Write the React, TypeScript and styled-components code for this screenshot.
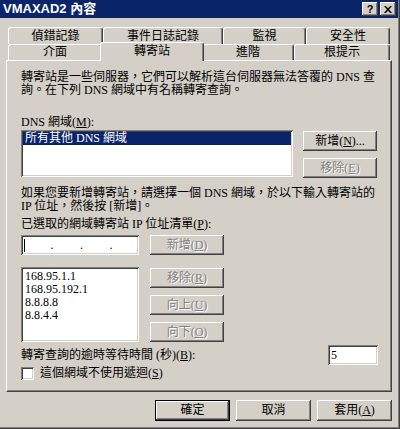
import React from 'react'
import styled, { createGlobalStyle } from 'styled-components'

const GlobalStyle = createGlobalStyle`
    html, body {
        margin: 0;
        padding: 0;
        background: #d4d0c8;
    }
    body {
        font-family: "Liberation Serif", "Noto Sans CJK TC", serif;
        font-size: 12px;
        color: #000;
    }
`

const raised = `
    background: #d4d0c8;
    box-shadow: inset -1px -1px #404040, inset 1px 1px #ffffff, inset -2px -2px #808080, inset 2px 2px #d4d0c8;
`

const sunken = `
    background: #ffffff;
    box-shadow: inset 1px 1px #808080, inset -1px -1px #ffffff, inset 2px 2px #404040, inset -2px -2px #d4d0c8;
`

const backTabs = [
    { label: '偵錯記錄', w: 95 },
    { label: '事件日誌記錄', w: 120 },
    { label: '監視', w: 83 },
    { label: '安全性', w: 84 },
]

const frontTabs = [
    { label: '介面', w: 94 },
    { label: '轉寄站', w: 104, active: true },
    { label: '進階', w: 92 },
    { label: '根提示', w: 96 },
]

const servers = ['168.95.1.1', '168.95.192.1', '8.8.8.8', '8.8.4.4']

const Key = ({ children }: { children: string }) => <u>{children}</u>

export default function App() {
    return (
        <>
            <GlobalStyle />
            <Window>
                <TitleBar>
                    <Title>VMAXAD2 內容</Title>
                    <TitleButtons>
                        <TitleButton>?</TitleButton>
                        <TitleButton>
                            <svg width="8" height="7" viewBox="0 0 8 7">
                                <path d="M0 0h2l2 2.5L6 0h2L5 3.5 8 7H6L4 4.5 2 7H0l3-3.5z" fill="#000" />
                            </svg>
                        </TitleButton>
                    </TitleButtons>
                </TitleBar>
                <Body>
                    <TabStrip>
                        <TabRow $h={17}>
                            {backTabs.map(t => (
                                <Tab key={t.label} $w={t.w}>{t.label}</Tab>
                            ))}
                        </TabRow>
                        <TabRow $h={16}>
                            {frontTabs.map(t => (
                                <Tab key={t.label} $w={t.w} $active={t.active}>{t.label}</Tab>
                            ))}
                        </TabRow>
                    </TabStrip>
                    <Panel>
                        <Para>
                            轉寄站是一些伺服器，它們可以解析這台伺服器無法答覆的 DNS 查
                            <br />
                            詢。在下列 DNS 網域中有名稱轉寄查詢。
                        </Para>
                        <FieldLabel $mt={19}>DNS 網域(<Key>M</Key>):</FieldLabel>
                        <ListRow $mt={1} $gap={10}>
                            <ListBox $w={272} $h={47}>
                                <ListItem $selected>所有其他 DNS 網域</ListItem>
                            </ListBox>
                            <ButtonColumn>
                                <Button>新增(<Key>N</Key>)...</Button>
                                <Button disabled>移除(<Key>E</Key>)</Button>
                            </ButtonColumn>
                        </ListRow>
                        <Para $mt={9}>
                            如果您要新增轉寄站，請選擇一個 DNS 網域，於以下輸入轉寄站的
                            <br />
                            IP 位址，然後按 [新增]。
                        </Para>
                        <FieldLabel $mt={5}>已選取的網域轉寄站 IP 位址清單(<Key>P</Key>):</FieldLabel>
                        <ListRow $mt={4} $gap={11}>
                            <IpField>
                                <IpSegment><Caret /></IpSegment>
                                <IpDot>.</IpDot>
                                <IpSegment />
                                <IpDot>.</IpDot>
                                <IpSegment />
                                <IpDot>.</IpDot>
                                <IpSegment />
                            </IpField>
                            <Button disabled>新增(<Key>D</Key>)</Button>
                        </ListRow>
                        <ListRow $mt={12} $gap={11}>
                            <ListBox $w={118} $h={75} $pt={1}>
                                {servers.map(s => (
                                    <ListItem key={s}>{s}</ListItem>
                                ))}
                            </ListBox>
                            <ButtonColumn>
                                <Button disabled>移除(<Key>R</Key>)</Button>
                                <Button disabled>向上(<Key>U</Key>)</Button>
                                <Button disabled>向下(<Key>O</Key>)</Button>
                            </ButtonColumn>
                        </ListRow>
                        <TimeoutRow>
                            <span>轉寄查詢的逾時等待時間 (秒)(<Key>B</Key>):</span>
                            <NumberField>5</NumberField>
                        </TimeoutRow>
                        <CheckRow>
                            <CheckBox />
                            <span>這個網域不使用遞迴(<Key>S</Key>)</span>
                        </CheckRow>
                    </Panel>
                    <ButtonBar>
                        <DialogButton $default>確定</DialogButton>
                        <DialogButton>取消</DialogButton>
                        <DialogButton>套用(<Key>A</Key>)</DialogButton>
                    </ButtonBar>
                </Body>
            </Window>
        </>
    )
}

const Window = styled.div`
    width: 400px;
    height: 429px;
    box-sizing: border-box;
    padding: 0 2px 2px 0;
    background: #d4d0c8;
    box-shadow: inset -1px -1px #404040, inset -2px -2px #808080;
    display: flex;
    flex-direction: column;
    overflow: hidden;
`

const TitleBar = styled.div`
    height: 18px;
    background: #0a246a;
    display: flex;
    align-items: center;
    justify-content: space-between;
    padding: 0 2px 0 3px;
`

const Title = styled.div`
    font-family: "Liberation Sans", "Noto Sans CJK TC", sans-serif;
    font-weight: 700;
    font-size: 13px;
    line-height: 16px;
    color: #ffffff;
    white-space: nowrap;
`

const TitleButtons = styled.div`
    display: flex;
    gap: 2px;
`

const TitleButton = styled.div`
    ${raised}
    width: 16px;
    height: 14px;
    display: flex;
    align-items: center;
    justify-content: center;
    font-family: "Liberation Sans", sans-serif;
    font-weight: 700;
    font-size: 11px;
    line-height: 14px;
`

const Body = styled.div`
    flex: 1;
    display: flex;
    flex-direction: column;
    padding: 9px 6px 0 6px;
`

const TabStrip = styled.div`
    display: flex;
    flex-direction: column;
    padding-left: 2px;
`

const TabRow = styled.div<{ $h: number }>`
    display: flex;
    height: ${p => p.$h}px;
`

const Tab = styled.div<{ $w: number; $active?: boolean }>`
    box-sizing: border-box;
    width: ${p => p.$w}px;
    height: ${p => (p.$active ? 'calc(100% + 3px)' : '100%')};
    margin: ${p => (p.$active ? '-2px -2px -1px' : '0')};
    padding-bottom: ${p => (p.$active ? '2px' : '0')};
    position: ${p => (p.$active ? 'relative' : 'static')};
    z-index: ${p => (p.$active ? 1 : 0)};
    background: #d4d0c8;
    border-top: 1px solid #ffffff;
    border-left: 1px solid #ffffff;
    border-right: 1px solid #404040;
    border-radius: 3px 3px 0 0;
    box-shadow: inset -1px 0 #808080;
    display: flex;
    align-items: center;
    justify-content: center;
    line-height: 13px;
    white-space: nowrap;
`

const Panel = styled.div`
    box-sizing: border-box;
    height: 332px;
    border-top: 1px solid #ffffff;
    border-left: 1px solid #ffffff;
    border-right: 1px solid #404040;
    border-bottom: 1px solid #404040;
    box-shadow: inset -1px -1px #808080;
    padding: 10px 13px 0 14px;
    display: flex;
    flex-direction: column;
`

const Para = styled.p<{ $mt?: number }>`
    margin: ${p => p.$mt ?? 0}px 0 0;
    line-height: 13px;
    white-space: nowrap;
`

const FieldLabel = styled.div<{ $mt: number }>`
    margin-top: ${p => p.$mt}px;
    line-height: 13px;
    white-space: nowrap;
`

const ListRow = styled.div<{ $mt: number; $gap: number }>`
    display: flex;
    align-items: flex-start;
    gap: ${p => p.$gap}px;
    margin-top: ${p => p.$mt}px;
`

const ListBox = styled.div<{ $w: number; $h: number; $pt?: number }>`
    ${sunken}
    box-sizing: border-box;
    width: ${p => p.$w}px;
    height: ${p => p.$h}px;
    padding: ${p => 2 + (p.$pt ?? 0)}px 2px 2px;
    overflow: hidden;
`

const ListItem = styled.div<{ $selected?: boolean }>`
    line-height: 13px;
    height: 13px;
    padding-left: 2px;
    white-space: nowrap;
    background: ${p => (p.$selected ? '#0a246a' : 'transparent')};
    color: ${p => (p.$selected ? '#ffffff' : '#000000')};
`

const ButtonColumn = styled.div`
    display: flex;
    flex-direction: column;
    gap: 7px;
    padding-top: 1px;
`

const Button = styled.div<{ disabled?: boolean }>`
    ${raised}
    box-sizing: border-box;
    width: 74px;
    height: 20px;
    display: flex;
    align-items: center;
    justify-content: center;
    line-height: 13px;
    white-space: nowrap;
    color: ${p => (p.disabled ? '#808080' : '#000000')};
    text-shadow: ${p => (p.disabled ? '1px 1px #ffffff' : 'none')};
`

const IpField = styled.div`
    ${sunken}
    box-sizing: border-box;
    width: 118px;
    height: 20px;
    padding-left: 3px;
    display: flex;
    align-items: center;
`

const IpSegment = styled.div`
    width: 27px;
    height: 14px;
    display: flex;
    align-items: center;
`

const IpDot = styled.div`
    width: 3px;
    text-align: center;
    line-height: 13px;
`

const Caret = styled.div`
    width: 1px;
    height: 13px;
    background: #000;
`

const TimeoutRow = styled.div`
    display: flex;
    align-items: center;
    justify-content: space-between;
    margin-top: 3px;
    line-height: 13px;
    white-space: nowrap;
`

const NumberField = styled.div`
    ${sunken}
    box-sizing: border-box;
    width: 50px;
    height: 20px;
    padding: 0 3px;
    line-height: 20px;
`

const CheckRow = styled.div`
    display: flex;
    align-items: center;
    gap: 6px;
    margin-top: 2px;
    line-height: 13px;
    white-space: nowrap;
`

const CheckBox = styled.div`
    ${sunken}
    width: 13px;
    height: 13px;
`

const ButtonBar = styled.div`
    display: flex;
    justify-content: flex-end;
    gap: 6px;
    margin-top: 8px;
`

const DialogButton = styled.div<{ $default?: boolean }>`
    box-sizing: border-box;
    width: 75px;
    height: 21px;
    background: #d4d0c8;
    box-shadow: ${p =>
        p.$default
            ? 'inset 0 0 0 1px #000000, inset -2px -2px #404040, inset 2px 2px #ffffff, inset -3px -3px #808080'
            : 'inset -1px -1px #404040, inset 1px 1px #ffffff, inset -2px -2px #808080, inset 2px 2px #d4d0c8'};
    display: flex;
    align-items: center;
    justify-content: center;
    line-height: 13px;
    white-space: nowrap;
`
